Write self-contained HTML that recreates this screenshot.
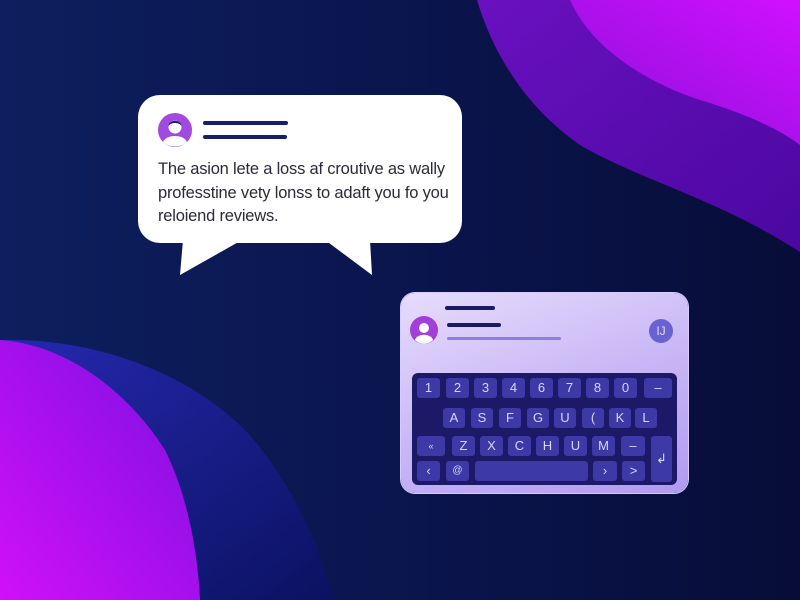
<!DOCTYPE html>
<html><head><meta charset="utf-8"><style>
html,body{margin:0;padding:0;width:800px;height:600px;overflow:hidden;}
body{position:relative;background:linear-gradient(90deg,#0d1f5e 0%,#0b1650 45%,#070d38 100%);font-family:"Liberation Sans",sans-serif;}
.abs{position:absolute;}
.bubble{left:138px;top:95px;width:324px;height:148px;background:#fff;border-radius:22px;}
.line{position:absolute;background:#14206e;border-radius:3px;height:4px;}
.txt{position:absolute;left:158px;top:158px;font-size:16.5px;line-height:23.5px;color:#2a2a3a;letter-spacing:-0.2px;white-space:nowrap;}
.panel{left:401px;top:293px;width:287px;height:200px;border-radius:14px;background:linear-gradient(160deg,#e6dcfc 0%,#c9b8f6 50%,#b09af0 100%);box-shadow:0 0 0 1px #d8ccff;}
.kb{left:412px;top:373px;width:265px;height:112px;background:#1c1a66;border-radius:6px;}
.k{position:absolute;background:#3d39a6;border-radius:3px;color:#d8d6ff;font-size:13px;text-align:center;line-height:20px;height:20px;}
</style></head><body>
<svg class="abs" style="left:0;top:0" width="800" height="600">
<defs>
<linearGradient id="g1" x1="0" y1="0" x2="1" y2="1"><stop offset="0" stop-color="#6a10c0"/><stop offset="1" stop-color="#4a08a0"/></linearGradient>
<linearGradient id="g2" x1="0" y1="1" x2="1" y2="0"><stop offset="0" stop-color="#8a10d8"/><stop offset="1" stop-color="#d010ff"/></linearGradient>
<linearGradient id="g3" x1="0" y1="0" x2="1" y2="1"><stop offset="0" stop-color="#2628b0"/><stop offset="1" stop-color="#0a1260"/></linearGradient>
<linearGradient id="g4" x1="0" y1="1" x2="1" y2="0"><stop offset="0" stop-color="#d010f8"/><stop offset="1" stop-color="#7a10e0"/></linearGradient>
</defs>
<path d="M477,0 C495,60 530,110 580,145 C640,180 720,200 800,252 L800,0Z" fill="url(#g1)"/>
<path d="M570,0 C590,45 640,80 700,100 C750,115 780,130 800,145 L800,0Z" fill="url(#g2)"/>
<path d="M0,340 C100,338 190,375 245,430 C295,485 320,550 335,600 L0,600Z" fill="url(#g3)"/>
<path d="M0,340 C70,345 130,395 165,450 C190,500 198,560 200,600 L0,600Z" fill="url(#g4)"/>
<path d="M183,240 L180,275 L242,240Z M325,240 L372,275 L370,240Z" fill="#fff"/>
</svg>
<div class="abs bubble"></div>
<svg class="abs" style="left:157px;top:112px" width="36" height="36"><circle cx="18" cy="18" r="17" fill="#a24ae0"/><circle cx="18" cy="15" r="6.5" fill="#fff"/><path d="M6,30 C9,22 27,22 30,30 C24,36 12,36 6,30Z" fill="#fff"/><path d="M11.5,14 C12,7 24,7 24.5,14 C22,10 14,10 11.5,14Z" fill="#2a1a70"/></svg>
<div class="line" style="left:203px;top:121px;width:85px"></div>
<div class="line" style="left:203px;top:135px;width:84px"></div>
<div class="txt">The asion lete a loss af croutive as wally<br>professtine vety lonss to adaft you fo you<br>reloiend reviews.</div>
<div class="abs panel"></div>
<svg class="abs" style="left:410px;top:316px" width="28" height="28"><circle cx="14" cy="14" r="14" fill="#a43ed8"/><circle cx="14" cy="12" r="5" fill="#fff"/><path d="M5,24 C7,17 21,17 23,24 C18,29 10,29 5,24Z" fill="#fff"/></svg>
<div class="line" style="left:445px;top:306px;width:50px;background:#1a1a60"></div>
<div class="line" style="left:447px;top:323px;width:54px;background:#1a1a60"></div>
<div class="line" style="left:447px;top:337px;width:114px;height:3px;background:#8a80e0"></div>
<div class="abs" style="left:649px;top:319px;width:24px;height:24px;border-radius:50%;background:#6a62d2;color:#e0ddff;font-size:12px;text-align:center;line-height:24px">IJ</div>
<div class="abs kb"></div>
<div class="k" style="left:417px;top:378px;width:23px">1</div>
<div class="k" style="left:446px;top:378px;width:23px">2</div>
<div class="k" style="left:474px;top:378px;width:23px">3</div>
<div class="k" style="left:502px;top:378px;width:23px">4</div>
<div class="k" style="left:530px;top:378px;width:23px">6</div>
<div class="k" style="left:558px;top:378px;width:23px">7</div>
<div class="k" style="left:586px;top:378px;width:23px">8</div>
<div class="k" style="left:614px;top:378px;width:23px">0</div>
<div class="k" style="left:644px;top:378px;width:28px">–</div>
<div class="k" style="left:443px;top:408px;width:22px">A</div>
<div class="k" style="left:471px;top:408px;width:22px">S</div>
<div class="k" style="left:499px;top:408px;width:22px">F</div>
<div class="k" style="left:527px;top:408px;width:22px">G</div>
<div class="k" style="left:554px;top:408px;width:22px">U</div>
<div class="k" style="left:582px;top:408px;width:22px">(</div>
<div class="k" style="left:609px;top:408px;width:22px">K</div>
<div class="k" style="left:635px;top:408px;width:22px">L</div>
<div class="k" style="left:417px;top:436px;width:28px;font-size:9px">«</div>
<div class="k" style="left:452px;top:436px;width:23px">Z</div>
<div class="k" style="left:480px;top:436px;width:23px">X</div>
<div class="k" style="left:508px;top:436px;width:23px">C</div>
<div class="k" style="left:536px;top:436px;width:23px">H</div>
<div class="k" style="left:564px;top:436px;width:23px">U</div>
<div class="k" style="left:592px;top:436px;width:23px">M</div>
<div class="k" style="left:621px;top:436px;width:24px">–</div>
<div class="k" style="left:651px;top:436px;width:21px;height:46px;line-height:46px">↲</div>
<div class="k" style="left:417px;top:461px;width:23px">‹</div>
<div class="k" style="left:446px;top:461px;width:23px;font-size:10px">@</div>
<div class="k" style="left:475px;top:461px;width:113px"></div>
<div class="k" style="left:593px;top:461px;width:24px">›</div>
<div class="k" style="left:622px;top:461px;width:23px">&gt;</div>
</body></html>
